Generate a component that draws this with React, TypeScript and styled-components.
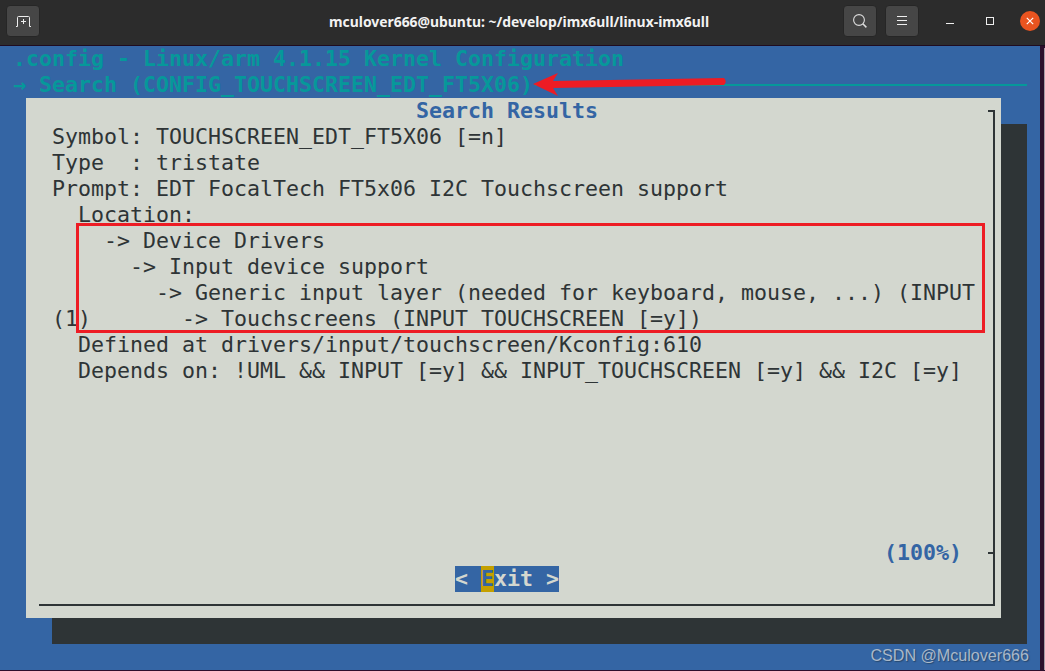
import React from "react";
import styled, { createGlobalStyle } from "styled-components";

const Global = createGlobalStyle`
  html, body { margin: 0; padding: 0; background: #300a24; }
  body { width: 1045px; height: 671px; overflow: hidden; }
`;

const Win = styled.div`
  width: 1045px;
  height: 671px;
  position: relative;
  display: flex;
  flex-direction: column;
  background: #2d0f2b;
`;

const TitleBar = styled.header`
  height: 45px;
  flex: none;
  box-sizing: border-box;
  background: #2c2c2c;
  display: flex;
  align-items: center;
  padding: 0 5px 3px 6px;
`;

const TopEdge = styled.div`
  height: 1px;
  flex: none;
  background: #1f0c20;
`;

const HeadButton = styled.button<{ $ml?: number }>`
  width: 34px;
  height: 32px;
  margin-left: ${(p) => p.$ml ?? 0}px;
  padding: 0;
  border: 1px solid #262626;
  border-radius: 4px;
  background: #464646;
  display: flex;
  align-items: center;
  justify-content: center;
  color: #eeeeee;
`;

const Title = styled.div`
  flex: 1;
  color: #f2f2f2;
  font: 700 13.9px "Noto Sans", "Open Sans", sans-serif;
  padding-left: 289px;
  white-space: nowrap;
`;

const WinButton = styled.div<{ $ml: number }>`
  width: 20px;
  height: 20px;
  margin-left: ${(p) => p.$ml}px;
  display: flex;
  align-items: center;
  justify-content: center;
`;

const CloseButton = styled.div`
  width: 20px;
  height: 20px;
  margin-left: 20px;
  border-radius: 50%;
  background: #e95420;
  display: flex;
  align-items: center;
  justify-content: center;
`;

const Content = styled.div`
  display: flex;
  justify-content: space-between;
  flex: none;
`;

const EdgeStrip = styled.div`
  width: 1px;
  height: 622px;
  margin-top: 2px;
  background: #a89ca6;
`;

const Terminal = styled.main`
  width: 1040px;
  height: 624px;
  flex: none;
  background: #3465a4;
  font-family: "DejaVu Sans Mono", "Liberation Mono", monospace;
  font-size: 21.6px;
  line-height: 26px;
  overflow: hidden;
`;

const HeaderLine = styled.div`
  height: 26px;
  padding: 0 13px;
  color: #06989a;
  font-weight: 700;
  white-space: pre;
  display: flex;
  align-items: center;
`;

const Rule = styled.div`
  flex: 1;
  height: 2px;
  margin-left: 2px;
  background: #06989a;
`;

const Dialog = styled.section`
  position: relative;
  width: 975px;
  height: 520px;
  margin-left: 26px;
  background: #d3d7cf;
  box-shadow: 26px 26px 0 #2e3436;
  color: #2e3436;
  display: flex;
  flex-direction: column;

  &::before {
    content: "";
    position: absolute;
    top: 12px;
    right: 6px;
    width: 7px;
    height: 2px;
    background: #2e3436;
  }

  &::after {
    content: "";
    position: absolute;
    left: 13px;
    right: 6px;
    top: 12px;
    bottom: 12px;
    border-right: 2px solid #2e3436;
    border-bottom: 2px solid #2e3436;
    pointer-events: none;
  }
`;

const DialogTitle = styled.div`
  height: 26px;
  text-align: center;
  padding-right: 13px;
  color: #3465a4;
  font-weight: 700;
  white-space: pre;
`;

const Body = styled.pre`
  flex: 1;
  margin: 0;
  padding-left: 26px;
  font: inherit;
  line-height: 26px;
`;

const Percent = styled.div`
  position: relative;
  height: 26px;
  padding-right: 39px;
  text-align: right;
  color: #3465a4;
  font-weight: 700;

  &::after {
    content: "";
    position: absolute;
    right: 8px;
    top: 12px;
    width: 5px;
    height: 2px;
    background: #2e3436;
  }
`;

const Footer = styled.div`
  height: 52px;
  flex: none;
  padding-left: 429px;
  box-sizing: border-box;
`;

const ExitButton = styled.span`
  display: inline-block;
  height: 26px;
  background: #3465a4;
  color: #d3d7cf;
  font-weight: 700;
  white-space: pre;
`;

const Hot = styled.span`
  display: inline-block;
  background: #c4a000;
  color: #3465a4;
`;

const RedBox = styled.div`
  position: absolute;
  left: 76px;
  top: 223px;
  width: 903px;
  height: 104px;
  border: 3px solid #ed1c24;
`;

const ArrowMark = styled.svg`
  position: absolute;
  left: 530px;
  top: 68px;
`;

const Watermark = styled.div`
  position: absolute;
  right: 16px;
  bottom: 6px;
  color: #aab8c8;
  font: 16.1px "Liberation Sans", Arial, sans-serif;
  text-shadow: 1px 1px 1px #26486f;
`;

const body = `Symbol: TOUCHSCREEN_EDT_FT5X06 [=n]
Type  : tristate
Prompt: EDT FocalTech FT5x06 I2C Touchscreen support
  Location:
    -> Device Drivers
      -> Input device support
        -> Generic input layer (needed for keyboard, mouse, ...) (INPUT
(1)       -> Touchscreens (INPUT_TOUCHSCREEN [=y])
  Defined at drivers/input/touchscreen/Kconfig:610
  Depends on: !UML && INPUT [=y] && INPUT_TOUCHSCREEN [=y] && I2C [=y]`;

export default function App() {
  return (
    <Win>
      <Global />
      <TitleBar>
        <HeadButton aria-label="New tab">
          <svg width="15" height="11" viewBox="0 0 15 11" fill="none" stroke="#eeeeee" strokeWidth="1">
            <path d="M0 10.5H1.5V1.5Q1.5 0.5 2.5 0.5H12.5Q13.5 0.5 13.5 1.5V10.5H15" />
            <path d="M7.5 3V8M5 5.5H10" />
          </svg>
        </HeadButton>
        <Title>mculover666@ubuntu: ~/develop/imx6ull/linux-imx6ull</Title>
        <HeadButton aria-label="Search">
          <svg width="14" height="14" viewBox="0 0 14 14" fill="none" stroke="#dddddd" strokeWidth="1.1">
            <circle cx="6" cy="6" r="5.4" />
            <path d="M9.8 9.8L13.4 13.4" strokeWidth="1.5" />
          </svg>
        </HeadButton>
        <HeadButton $ml={8} aria-label="Menu">
          <svg width="10" height="10" viewBox="0 0 10 10" stroke="#eeeeee" strokeWidth="1">
            <path d="M0 0.5H10M0 4.5H10M0 8.5H10" />
          </svg>
        </HeadButton>
        <WinButton $ml={21}>
          <svg width="8" height="8" viewBox="0 0 8 8" stroke="#eeeeee" strokeWidth="1">
            <path d="M0 6.5H8" />
          </svg>
        </WinButton>
        <WinButton $ml={20}>
          <svg width="8" height="8" viewBox="0 0 8 8" fill="none" stroke="#eeeeee" strokeWidth="1">
            <rect x="0.5" y="0.5" width="7" height="7" />
          </svg>
        </WinButton>
        <CloseButton>
          <svg width="8" height="8" viewBox="0 0 8 8" stroke="#ffffff" strokeWidth="1.2">
            <path d="M0.8 0.8L7.2 7.2M7.2 0.8L0.8 7.2" />
          </svg>
        </CloseButton>
      </TitleBar>
      <TopEdge />
      <Content>
        <Terminal>
          <HeaderLine>.config - Linux/arm 4.1.15 Kernel Configuration</HeaderLine>
          <HeaderLine>
            → Search (CONFIG_TOUCHSCREEN_EDT_FT5X06)
            <Rule />
          </HeaderLine>
          <Dialog>
            <DialogTitle>Search Results</DialogTitle>
            <Body>{body}</Body>
            <Percent>(100%)</Percent>
            <Footer>
              <ExitButton>
                {"< "}
                <Hot>E</Hot>
                {"xit >"}
              </ExitButton>
            </Footer>
          </Dialog>
        </Terminal>
        <EdgeStrip />
      </Content>
      <RedBox />
      <ArrowMark width="200" height="32" viewBox="0 0 200 32">
        <path d="M3 16L28 5L23 13L194 10Q197.5 13.5 194 17L23 20L28 28Z" fill="#ed1c24" />
      </ArrowMark>
      <Watermark>CSDN @Mculover666</Watermark>
    </Win>
  );
}
